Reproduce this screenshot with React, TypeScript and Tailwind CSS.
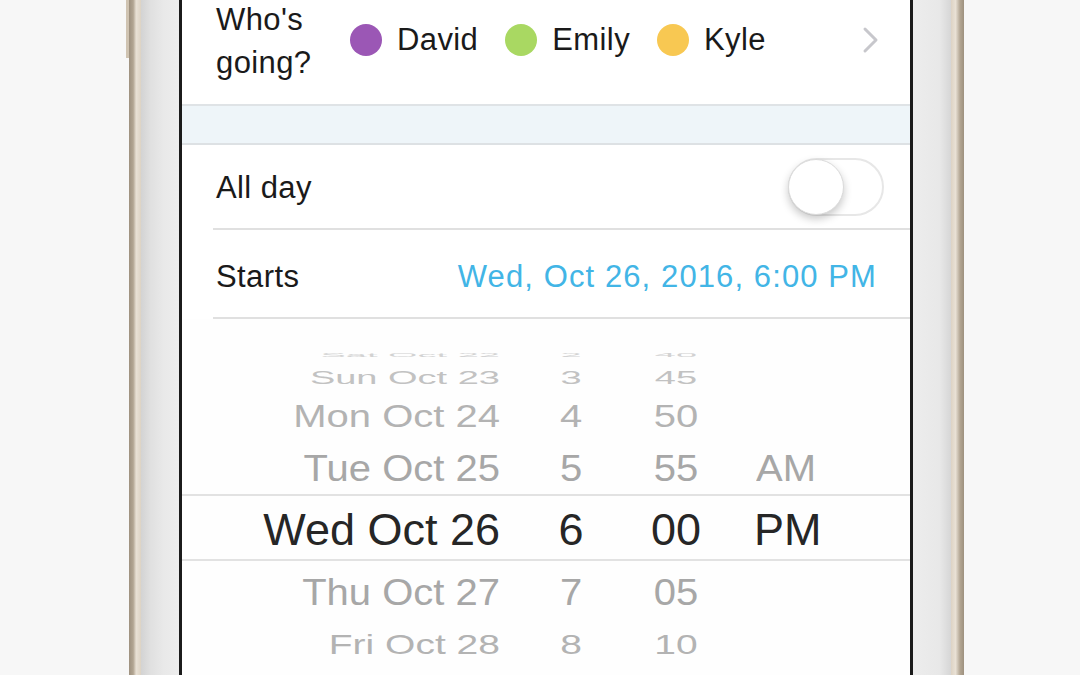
import React from "react";

const sans = { fontFamily: '"Liberation Sans", Arial, sans-serif' };

interface PickerRow {
  date: string;
  hour: string;
  minute: string;
  ampm?: string;
  height: string;
  scale: string;
  color: string;
  size: string;
}

const rowsAbove: PickerRow[] = [
  { date: "Sat Oct 22", hour: "2", minute: "40", height: "h-[14px]", scale: "scale-y-[0.15]", color: "text-[#d2d2d2]", size: "text-[38px]" },
  { date: "Sun Oct 23", hour: "3", minute: "45", height: "h-[30px]", scale: "scale-y-[0.48]", color: "text-[#c2c2c2]", size: "text-[38px]" },
  { date: "Mon Oct 24", hour: "4", minute: "50", height: "h-[46px]", scale: "scale-y-[0.78]", color: "text-[#b3b3b3]", size: "text-[40px]" },
  { date: "Tue Oct 25", hour: "5", minute: "55", ampm: "AM", height: "h-[56px]", scale: "scale-y-[0.94]", color: "text-[#a7a7a7]", size: "text-[40px]" },
];

const rowsBelow: PickerRow[] = [
  { date: "Thu Oct 27", hour: "7", minute: "05", height: "h-[58px]", scale: "scale-y-[0.94]", color: "text-[#a7a7a7]", size: "text-[40px]" },
  { date: "Fri Oct 28", hour: "8", minute: "10", height: "h-[46px]", scale: "scale-y-[0.72]", color: "text-[#b3b3b3]", size: "text-[39px]" },
  { date: "Sat Oct 29", hour: "9", minute: "15", height: "h-[34px]", scale: "scale-y-[0.45]", color: "text-[#c2c2c2]", size: "text-[38px]" },
];

function Row({ date, hour, minute, ampm, height, scale, color, size }: PickerRow) {
  return (
    <div className={`shrink-0 flex items-center ${height} ${color} ${size} leading-none`}>
      <div className={`w-[318px] pt-[4px] text-right ${scale}`}>{date}</div>
      <div className={`ml-[41px] w-[60px] pt-[4px] text-center ${scale}`}>{hour}</div>
      <div className={`ml-[35px] w-[80px] pt-[4px] text-center ${scale}`}>{minute}</div>
      <div className={`ml-[40px] pt-[4px] ${scale}`}>{ampm ?? ""}</div>
    </div>
  );
}

function Person({ name, color }: { name: string; color: string }) {
  return (
    <div className="flex items-center">
      <span className={`w-[32px] h-[32px] rounded-full ${color}`} />
      <span className="ml-[15px]">{name}</span>
    </div>
  );
}

export default function App() {
  return (
    <div className="flex h-[675px] w-[1080px] overflow-hidden bg-[#f7f7f7]" style={sans}>
      {/* left of phone, with side button */}
      <div className="w-[129px] flex justify-end">
        <div className="w-[3px] h-[58px] bg-[#cfc3b1]" />
      </div>
      <div className="w-[12px] bg-[linear-gradient(to_right,#9e917f,#b2a592_35%,#e9e1d5_60%,#ddd3c4)]" />
      <div className="w-[38px] bg-[linear-gradient(to_right,#d3d3d3,#e0e0e0_25%,#e9e9e9_60%,#ededed)]" />
      <div className="w-[3px] bg-[#1b1b1b]" />

      {/* screen */}
      <div className="w-[728px] bg-white flex flex-col text-[#1a1a1a] overflow-hidden">
        <div className="shrink-0 -mt-[24px] h-[130px] flex items-center pl-[34px] text-[31px] tracking-[0.4px] border-b-2 border-[#dfe3e6]">
          <div className="w-[134px] leading-[43px] pt-[2px]">
            Who's
            <br />
            going?
          </div>
          <div className="flex items-center gap-[27px]">
            <Person name="David" color="bg-[#9b57b5]" />
            <Person name="Emily" color="bg-[#a9d862]" />
            <Person name="Kyle" color="bg-[#f8c852]" />
          </div>
          <svg className="ml-auto mr-[30px]" width="18" height="28" viewBox="0 0 18 28" fill="none">
            <polyline points="3,3 14,14 3,25" stroke="#c7c7cc" strokeWidth="3" strokeLinecap="round" strokeLinejoin="round" />
          </svg>
        </div>

        <div className="shrink-0 h-[39px] bg-[#eef5f9] border-b-2 border-[#dde1e4]" />

        <div className="shrink-0 ml-[31px] h-[85px] flex items-center border-b-2 border-[#e0e0e0] text-[31px] tracking-[0.4px]">
          <span className="ml-[3px] pt-[4px]">All day</span>
          <div className="ml-auto mr-[26px] w-[96px] h-[58px] rounded-full border-2 border-[#e7e7e7] bg-white flex items-center">
            <div className="-ml-[2px] w-[56px] h-[56px] rounded-full bg-white border border-[#dadada] shadow-[0_4px_8px_rgba(0,0,0,0.22)]" />
          </div>
        </div>

        <div className="shrink-0 ml-[31px] h-[89px] flex items-center border-b-2 border-[#e0e0e0] text-[31px] tracking-[0.4px]">
          <span className="ml-[3px] pt-[7px]">Starts</span>
          <span className="ml-auto mr-[33px] pt-[7px] text-[#42b5e6] tracking-[1.1px]">Wed, Oct 26, 2016, 6:00 PM</span>
        </div>

        {/* date picker */}
        <div className="shrink-0 flex flex-col pt-[29px] bg-[#fefefe]">
          {rowsAbove.map((r) => (
            <Row key={r.date} {...r} />
          ))}
          <div className="shrink-0 h-[67px] flex items-center border-y-2 border-[#e2e2e2] text-[45px] leading-none text-[#262626]">
            <div className="w-[318px] pt-[4px] text-right">Wed Oct 26</div>
            <div className="ml-[41px] w-[60px] pt-[4px] text-center">6</div>
            <div className="ml-[35px] w-[80px] pt-[4px] text-center">00</div>
            <div className="ml-[38px] pt-[4px]">PM</div>
          </div>
          {rowsBelow.map((r) => (
            <Row key={r.date} {...r} />
          ))}
        </div>
      </div>

      <div className="w-[3px] bg-[#1b1b1b]" />
      <div className="w-[38px] bg-[linear-gradient(to_right,#ededed,#e8e8e8_70%,#d6d6d6)]" />
      <div className="w-[13px] bg-[linear-gradient(to_right,#ddd3c4,#e9e1d5_35%,#b2a592_70%,#9e917f)]" />
      <div className="flex-1" />
    </div>
  );
}
